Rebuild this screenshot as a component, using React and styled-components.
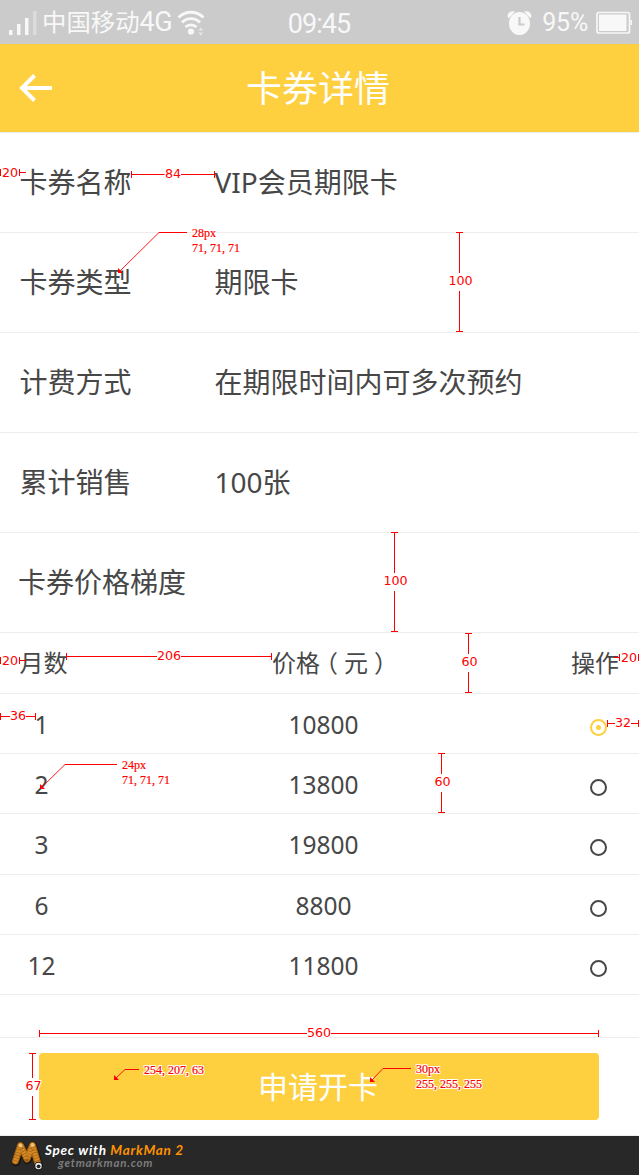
import React from "react";
import styled, { createGlobalStyle } from "styled-components";

const YELLOW = "#fecf3f";
const INK = "#474747";
const LINE = "#ededed";
const RED = "#ff0000";

const GlobalStyle = createGlobalStyle`
  * { box-sizing: border-box; }
  body {
    margin: 0;
    background: #fff;
    color: ${INK};
    font-family: "Noto Sans", "Noto Sans CJK SC", sans-serif;
  }
`;

const Screen = styled.div`
  position: relative;
  width: 639px;
  height: 1175px;
  overflow: hidden;
  display: flex;
  flex-direction: column;
`;

/* Status bar */
const StatusBar = styled.div`
  height: 44px;
  flex: none;
  display: grid;
  grid-template-columns: 1fr auto 1fr;
  align-items: center;
  padding: 0 6px 2px 8px;
  background: #cbcbcb;
  color: #f8f8f8;
`;
const StatusGroup = styled.div`
  display: flex;
  align-items: center;
  justify-content: ${(p) => (p.$end ? "flex-end" : "flex-start")};
`;
const Carrier = styled.span`
  margin: 0 5px 0 5px;
  font: 400 24.4px/42px Roboto, "Noto Sans CJK SC", sans-serif;
  white-space: nowrap;
`;
const Network = styled.span`
  font-size: 27px;
  letter-spacing: -0.6px;
`;
const Clock = styled.span`
  margin-left: -3px;
  padding-top: 4px;
  font: 400 27px/41px Roboto, sans-serif;
  letter-spacing: -0.9px;
`;
const Percent = styled.span`
  margin: 0 8px 0 10px;
  font: 400 25px/42px Roboto, sans-serif;
  letter-spacing: -0.2px;
`;

/* Title bar */
const TitleBar = styled.header`
  height: 88px;
  flex: none;
  display: grid;
  grid-template-columns: 52px 1fr 52px;
  align-items: center;
  padding-left: 18px;
  padding-right: 21px;
  background: ${YELLOW};
  color: #fff;
`;
const Title = styled.h1`
  margin: 0;
  padding-top: 2px;
  font-size: 36px;
  font-weight: 400;
  line-height: 86px;
  text-align: center;
`;

/* Detail rows */
const Details = styled.dl`
  margin: 0;
  border-top: 1px solid ${LINE};
`;
const DetailRow = styled.div`
  display: flex;
  height: 100px;
  padding-left: ${(p) => (p.$heading ? 18 : 19.5)}px;
  border-bottom: 1px solid ${LINE};
  font-size: 28px;
  line-height: 98px;
`;
const Label = styled.dt`
  width: 195px;
  white-space: nowrap;
`;
const Value = styled.dd`
  margin: 0;
`;

/* Price table */
const PriceRow = styled.div`
  display: grid;
  grid-template-columns: 83px 481px 1fr;
  height: ${(p) => p.$height || 60}px;
  border-bottom: 1px solid ${LINE};
  font-size: 24.5px;
  line-height: 62px;
  text-align: center;
`;
const HeadRow = styled(PriceRow)`
  grid-template-columns: 87px 483px 50px;
  font-size: 24px;
  line-height: 59px;
`;
const Cell = styled.div`
  white-space: nowrap;
`;
const HeadCell = styled(Cell)`
  padding-left: ${(p) => p.$indent || 0}px;
`;
const CenteredPunctuation = styled.span`
  display: inline-block;
  margin: 0 6px;
  font-feature-settings: "halt";
`;
const RadioCell = styled.div`
  display: flex;
  justify-content: center;
  align-items: center;
  padding: 8px 6px 4px 0;
`;
const Radio = styled.span`
  width: 17px;
  height: 17px;
  display: grid;
  place-items: center;
  border: 2px solid ${(p) => (p.$on ? YELLOW : INK)};
  border-radius: 50%;
  &::after {
    content: "";
    width: 5px;
    height: 5px;
    border-radius: 50%;
    background: ${(p) => (p.$on ? YELLOW : "transparent")};
  }
`;

/* Action area */
const Actions = styled.div`
  margin-top: 42px;
  height: 99px;
  flex: none;
  padding: 15px 40px 0 39px;
  border-top: 1px solid ${LINE};
  border-bottom: 1px solid ${LINE};
`;
const ApplyButton = styled.button`
  width: 100%;
  height: 67px;
  padding: 0 2px 0 0;
  border: 0;
  border-radius: 4px;
  background: ${YELLOW};
  color: #fff;
  font: 400 30px/67px "Noto Sans", "Noto Sans CJK SC", sans-serif;
`;

/* Footer */
const Footer = styled.footer`
  display: flex;
  gap: 1px;
  height: 39px;
  padding-left: 11px;
  background: #282828;
  font-family: Lato, sans-serif;
  font-style: italic;
  font-weight: 700;
`;
const Credits = styled.div`
  padding-top: 6px;
  display: flex;
  flex-direction: column;
`;
const Credit = styled.div`
  font-size: 13.5px;
  line-height: 16px;
  color: #fff;
  letter-spacing: 0.72px;
`;
const Product = styled.span`
  color: #ff9200;
`;
const Site = styled.div`
  margin-left: 13px;
  font-size: 11.5px;
  line-height: 10px;
  color: #7c7c7c;
  letter-spacing: 0.75px;
`;

/* Measurements laid over the screen */
const Overlay = styled.div`
  position: absolute;
  inset: 0;
  color: ${RED};
  pointer-events: none;
`;
const outline = `
  text-shadow: 1px 0 #fff, -1px 0 #fff, 0 1px #fff, 0 -1px #fff,
    1px 1px #fff, -1px -1px #fff, 1px -1px #fff, -1px 1px #fff;
`;
const Measure = styled.div`
  position: absolute;
  left: ${(p) => p.$x}px;
  top: ${(p) => p.$y}px;
  display: flex;
  align-items: center;
  flex-direction: ${(p) => (p.$vertical ? "column" : "row")};
  width: ${(p) => (p.$vertical ? 9 : p.$size)}px;
  height: ${(p) => (p.$vertical ? p.$size : 9)}px;
`;
const Cap = styled.i`
  flex: none;
  width: ${(p) => (p.$vertical ? 7 : 1)}px;
  height: ${(p) => (p.$vertical ? 1 : 7)}px;
  background: ${RED};
`;
const Rule = styled.i`
  flex: ${(p) => (p.$length ? `0 0 ${p.$length}px` : "1 1 0")};
  width: ${(p) => (p.$vertical ? "1px" : "auto")};
  height: ${(p) => (p.$vertical ? "auto" : "1px")};
  background: ${RED};
`;
const Amount = styled.span`
  flex: none;
  margin: ${(p) => (p.$vertical ? 0 : p.$edge ? "0 auto" : "0 0 1px")};
  padding: ${(p) => (p.$vertical ? "1px 0 3px 2px" : 0)};
  font: 12.7px/14px "DejaVu Sans", sans-serif;
  letter-spacing: -0.1px;
  white-space: nowrap;
  ${outline}
`;
const Note = styled.div`
  position: absolute;
  left: ${(p) => p.$x}px;
  top: ${(p) => p.$y}px;
  font: 12px/15px "Liberation Serif", serif;
  -webkit-text-stroke: 0.2px ${RED};
  white-space: nowrap;
  ${outline}
`;
const Leader = styled.svg`
  position: absolute;
  inset: 0;
  fill: none;
  stroke: ${RED};
`;

function Dimension({ x, y, size, label, vertical }) {
  return (
    <Measure $x={x} $y={y} $size={size} $vertical={vertical}>
      <Cap $vertical={vertical} />
      <Rule $vertical={vertical} />
      <Amount $vertical={vertical}>{label}</Amount>
      <Rule $vertical={vertical} />
      <Cap $vertical={vertical} />
    </Measure>
  );
}

function EdgeDimension({ x, y, size, right }) {
  return (
    <Measure $x={x} $y={y} $size={size}>
      {right && <Rule $length={5} />}
      <Cap />
      <Amount $edge>20</Amount>
      <Cap />
      {!right && <Rule $length={6} />}
    </Measure>
  );
}

function Callout({ from, tip, elbow, lines }) {
  const [x, y] = from;
  const [tx, ty] = tip;
  return (
    <>
      <Leader width="639" height="1175">
        <path d={`M${x} ${y + 0.5}H${elbow}`} />
        <path d={`M${elbow} ${y + 0.5}L${tx + 1} ${ty - 1}`} strokeWidth="0.9" />
        <path d={`M${tx} ${ty}v-5l5 5z`} fill={RED} stroke="none" />
      </Leader>
      <Note $x={x + 5} $y={y - 6}>
        {lines.map((l) => (
          <div key={l}>{l}</div>
        ))}
      </Note>
    </>
  );
}

const SignalIcon = () => (
  <svg width="29" height="28" viewBox="0 0 29 28" fill="#f8f8f8">
    <rect x="1" y="21" width="3.5" height="5" />
    <rect x="9" y="15" width="3.5" height="11" />
    <rect x="17" y="9" width="3.5" height="17" />
    <rect x="25" y="2" width="3.5" height="24" opacity=".35" />
  </svg>
);
const WifiIcon = () => (
  <svg width="28" height="26" viewBox="0 0 28 26" fill="none" stroke="#f8f8f8" strokeWidth="2.8">
    <path d="M1.500 7.500a17.500 17.500 0 0 1 25 0M5 12.500a12.500 12.500 0 0 1 18 0M8.500 17a8 8 0 0 1 11 0" />
    <circle cx="14" cy="21.500" r="3.1" fill="#f8f8f8" stroke="none" />
    <path d="M21.5 20.500l2.300-3 2.300 3zM21.5 22.500l2.300 3 2.300-3z" fill="#e8e8e8" stroke="none" />
  </svg>
);
const AlarmIcon = () => (
  <svg width="25" height="26" viewBox="0 0 25 26" fill="#f8f8f8">
    <path d="M.8 7.5C-.4 3.5 3.500 .2 8 1.600L2 8zM24.200 7.500C25.400 3.500 21.500 .2 17 1.600L23 8z" />
    <ellipse cx="12.5" cy="13.500" rx="10.500" ry="11.500" />
    <path d="M12.500 7v7.500h5" fill="none" stroke="#cbcbcb" strokeWidth="2.2" />
  </svg>
);
const BatteryIcon = () => (
  <svg width="37" height="24" viewBox="0 0 37 24">
    <rect x="1" y="1.500" width="32.500" height="20.500" rx="2" fill="none" stroke="#f8f8f8" strokeWidth="1.700" />
    <rect x="3" y="3.500" width="27.500" height="16.500" fill="#f8f8f8" />
    <path d="M34.500 9h1.500v5h-1.500z" fill="#f8f8f8" />
  </svg>
);
const BackIcon = () => (
  <svg width="34" height="30" viewBox="0 0 34 30" fill="none" stroke="#fff" strokeWidth="4">
    <path d="M4 15h30M16.500 2.500L4 15l12.500 12.500" />
  </svg>
);
const WORM_BODY = "M4.500 21L9.500 5.500L16 19L21.500 5.500L27 24";
const WormLogo = () => (
  <svg width="33" height="39" viewBox="0 0 33 39" fill="none" strokeLinecap="round" strokeLinejoin="round">
    <g transform="translate(0 4)">
      <path d={WORM_BODY} stroke="#151515" strokeWidth="8.500" transform="translate(.5 1)" />
      <path d={WORM_BODY} stroke="#a5610f" strokeWidth="7" />
      <path d={WORM_BODY} stroke="#d58a26" strokeWidth="4.800" />
      <path d={WORM_BODY} stroke="#8a4b08" strokeOpacity=".75" strokeWidth="5" strokeLinecap="butt" strokeDasharray=".6 2.200" />
      <circle cx="9.500" cy="5.500" r="2" fill="#f1c27a" />
      <circle cx="21.500" cy="5" r="2" fill="#f1c27a" />
      <circle cx="27.500" cy="26" r="4.200" fill="#1a1a1a" />
      <circle cx="27.500" cy="26" r="3.200" fill="#eee" />
      <circle cx="27.600" cy="26.300" r="1.900" fill="#222" />
    </g>
  </svg>
);

const details = [
  ["卡券名称", "VIP会员期限卡"],
  ["卡券类型", "期限卡"],
  ["计费方式", "在期限时间内可多次预约"],
  ["累计销售", "100张"],
];
const prices = [
  { months: 1, price: 10800, on: true },
  { months: 2, price: 13800 },
  { months: 3, price: 19800, height: 61 },
  { months: 6, price: 8800 },
  { months: 12, price: 11800 },
];

export default function App() {
  return (
    <Screen>
      <GlobalStyle />
      <StatusBar>
        <StatusGroup>
          <SignalIcon />
          <Carrier>
            中国移动<Network>4G</Network>
          </Carrier>
          <WifiIcon />
        </StatusGroup>
        <Clock>09:45</Clock>
        <StatusGroup $end>
          <AlarmIcon />
          <Percent>95%</Percent>
          <BatteryIcon />
        </StatusGroup>
      </StatusBar>
      <TitleBar>
        <BackIcon />
        <Title>卡券详情</Title>
      </TitleBar>
      <Details>
        {details.map(([label, value]) => (
          <DetailRow key={label}>
            <Label>{label}</Label>
            <Value>{value}</Value>
          </DetailRow>
        ))}
        <DetailRow $heading>
          <Label>卡券价格梯度</Label>
        </DetailRow>
      </Details>
      <HeadRow $height={61}>
        <HeadCell>月数</HeadCell>
        <HeadCell $indent={7}>
          价格
          <CenteredPunctuation>（</CenteredPunctuation>元
          <CenteredPunctuation>）</CenteredPunctuation>
        </HeadCell>
        <HeadCell>操作</HeadCell>
      </HeadRow>
      {prices.map((p) => (
        <PriceRow key={p.months} $height={p.height}>
          <Cell>{p.months}</Cell>
          <Cell>{p.price}</Cell>
          <RadioCell>
            <Radio $on={p.on} />
          </RadioCell>
        </PriceRow>
      ))}
      <Actions>
        <ApplyButton>申请开卡</ApplyButton>
      </Actions>
      <Footer>
        <WormLogo />
        <Credits>
          <Credit>
            Spec with <Product>MarkMan 2</Product>
          </Credit>
          <Site>getmarkman.com</Site>
        </Credits>
      </Footer>
      <Overlay>
        <EdgeDimension x={0} y={168} size={26} />
        <EdgeDimension x={0} y={656} size={26} />
        <EdgeDimension x={614} y={653} size={25} right />
        <Dimension x={131} y={170} size={84} label="84" />
        <Dimension x={66} y={652} size={206} label="206" />
        <Dimension x={0} y={712} size={36} label="36" />
        <Dimension x={607} y={719} size={32} label="32" />
        <Dimension x={39} y={1029} size={560} label="560" />
        <Dimension vertical x={455} y={232} size={100} label="100" />
        <Dimension vertical x={390} y={532} size={100} label="100" />
        <Dimension vertical x={464} y={633} size={60} label="60" />
        <Dimension vertical x={437} y={753} size={60} label="60" />
        <Dimension vertical x={28} y={1053} size={67} label="67" />
        <Callout from={[187, 232]} elbow={159} tip={[118, 273]} lines={["28px", "71, 71, 71"]} />
        <Callout from={[117, 764]} elbow={65} tip={[40, 789]} lines={["24px", "71, 71, 71"]} />
        <Callout from={[139, 1069]} elbow={125} tip={[114, 1080]} lines={["254, 207, 63"]} />
        <Callout from={[411, 1068]} elbow={383} tip={[370, 1082]} lines={["30px", "255, 255, 255"]} />
      </Overlay>
    </Screen>
  );
}
